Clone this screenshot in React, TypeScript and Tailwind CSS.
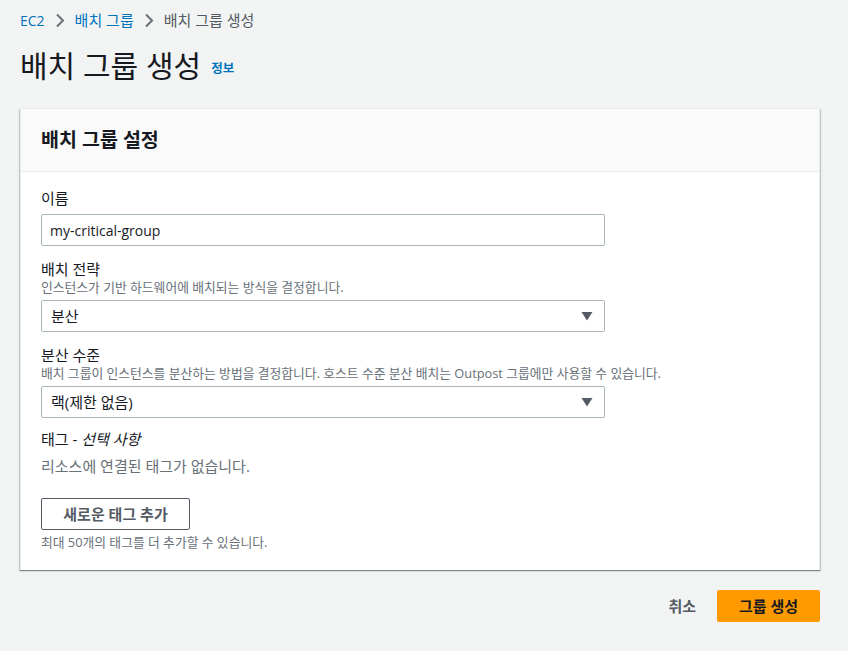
const font = { fontFamily: '"Open Sans", "Noto Sans CJK KR", sans-serif' };

function Caret() {
  return (
    <svg aria-hidden="true" width="12" height="10" viewBox="0 0 12 10" className="text-[#545b64]">
      <path d="M0.5 1h11L6 9.5z" fill="currentColor" />
    </svg>
  );
}

function Chevron() {
  return (
    <svg aria-hidden="true" width="10" height="15" viewBox="0 0 10 15" className="mx-[10px] text-[#687078]">
      <path d="M2 1.5 8 7.5 2 13.5" fill="none" stroke="currentColor" strokeWidth="2" />
    </svg>
  );
}

function Select({ value }: { value: string }) {
  return (
    <div className="mt-[6px] flex h-[32px] w-[564px] items-center justify-between rounded-[2px] border border-[#aab7b8] bg-white pl-[9px] pr-[11px] text-[15px] text-[#16191f]">
      <span>{value}</span>
      <Caret />
    </div>
  );
}

export default function App() {
  return (
    <div className="min-h-[651px] bg-[#f2f3f3] pl-[20px] pr-[28px] pt-[9px] text-[#16191f]" style={font}>
      <nav className="flex h-[22px] items-center text-[15px]">
        <a className="text-[14px] text-[#0073bb]">EC2</a>
        <Chevron />
        <a className="text-[#0073bb]">배치 그룹</a>
        <Chevron />
        <span className="text-[#545b64]">배치 그룹 생성</span>
      </nav>

      <div className="mt-[14px] flex items-end gap-[10px]">
        <h1 className="text-[30px] leading-[41px] font-normal text-[#16191f]">배치 그룹 생성</h1>
        <a className="mb-[7px] text-[12.5px] font-bold text-[#0073bb]">정보</a>
      </div>

      <section className="mt-[22px] border-t border-x border-[#eaeded] bg-white shadow-[0_1px_1px_0_rgba(0,28,36,0.3),1px_1px_1px_0_rgba(0,28,36,0.15),-1px_1px_1px_0_rgba(0,28,36,0.15)]">
        <header className="flex h-[63px] items-center border-b border-[#eaeded] bg-[#fafafa] px-[20px]">
          <h2 className="text-[19.5px] font-bold">배치 그룹 설정</h2>
        </header>

        <div className="px-[20px] pt-[15px] pb-[20px]">
          <label className="block text-[15px] leading-[22px]">이름</label>
          <div className="mt-[5px] flex h-[32px] w-[564px] items-center rounded-[2px] border border-[#aab7b8] px-[8px] text-[14px]">
            my-critical-group
          </div>

          <div className="mt-[12px] text-[15px] leading-[22px]">배치 전략</div>
          <div className="text-[12.8px] leading-[14px] text-[#687078]">인스턴스가 기반 하드웨어에 배치되는 방식을 결정합니다.</div>
          <Select value="분산" />

          <div className="mt-[12px] text-[15px] leading-[22px]">분산 수준</div>
          <div className="text-[12.8px] leading-[14px] text-[#687078]">
            배치 그룹이 인스턴스를 분산하는 방법을 결정합니다. 호스트 수준 분산 배치는 Outpost 그룹에만 사용할 수 있습니다.
          </div>
          <Select value="랙(제한 없음)" />

          <div className="mt-[10px] text-[15px] leading-[22px]">
            태그 - <i>선택 사항</i>
          </div>
          <div className="mt-[5px] text-[15px] leading-[22px] text-[#687078]">리소스에 연결된 태그가 없습니다.</div>

          <button className="mt-[21px] flex h-[32px] w-[149px] items-center justify-center rounded-[2px] border border-[#545b64] bg-white text-[15px] font-bold text-[#545b64]">
            새로운 태그 추가
          </button>
          <div className="mt-[4px] text-[12.8px] leading-[16px] text-[#687078]">최대 50개의 태그를 더 추가할 수 있습니다.</div>
        </div>
      </section>

      <div className="mt-[20px] flex items-center justify-end gap-[21px]">
        <button className="text-[15px] font-bold text-[#545b64]">취소</button>
        <button className="flex h-[32px] w-[103px] items-center justify-center rounded-[2px] bg-[#ff9900] text-[15px] font-bold text-[#16191f]">
          그룹 생성
        </button>
      </div>
    </div>
  );
}
